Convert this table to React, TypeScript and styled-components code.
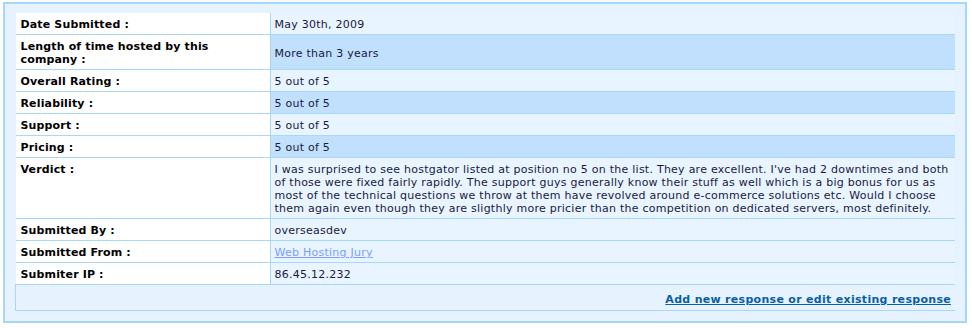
import styled, { createGlobalStyle } from 'styled-components';

const GlobalStyle = createGlobalStyle`
    body {
        margin: 0;
        background: #ffffff;
        font-family: "DejaVu Sans", Verdana, sans-serif;
    }
`;

const rows: { label: string; value: string; alt?: boolean; link?: boolean }[] = [
    { label: 'Date Submitted :', value: 'May 30th, 2009' },
    { label: 'Length of time hosted by this company :', value: 'More than 3 years', alt: true },
    { label: 'Overall Rating :', value: '5 out of 5' },
    { label: 'Reliability :', value: '5 out of 5', alt: true },
    { label: 'Support :', value: '5 out of 5' },
    { label: 'Pricing :', value: '5 out of 5', alt: true },
    {
        label: 'Verdict :',
        value: "I was surprised to see hostgator listed at position no 5 on the list. They are excellent. I've had 2 downtimes and both of those were fixed fairly rapidly. The support guys generally know their stuff as well which is a big bonus for us as most of the technical questions we throw at them have revolved around e-commerce solutions etc. Would I choose them again even though they are sligthly more pricier than the competition on dedicated servers, most definitely."
    },
    { label: 'Submitted By :', value: 'overseasdev' },
    { label: 'Submitted From :', value: 'Web Hosting Jury', link: true },
    { label: 'Submiter IP :', value: '86.45.12.232' },
];

function App() {
    return (
        <Wrapper>
            <GlobalStyle />
            <ReviewBox>
                <ReviewTable>
                    <tbody>
                        {rows.map(r => (
                            <tr key={r.label}>
                                <LabelCell>{r.label}</LabelCell>
                                <ValueCell $alt={r.alt}>
                                    {r.link ? <SourceLink href="#">{r.value}</SourceLink> : r.value}
                                </ValueCell>
                            </tr>
                        ))}
                        <tr>
                            <FooterCell colSpan={2}>
                                <ResponseLink href="#">Add new response or edit existing response</ResponseLink>
                            </FooterCell>
                        </tr>
                    </tbody>
                </ReviewTable>
            </ReviewBox>
        </Wrapper>
    )
}

const Wrapper = styled.div`
    padding: 2px 5px 0 3px;
`;

const ReviewBox = styled.div`
    width: 964px;
    box-sizing: border-box;
    border: 2px solid #a6d6f8;
    background: #e6f3ff;
    padding: 9px 10px 10px 10px;
`;

const ReviewTable = styled.table`
    width: 940px;
    border-collapse: collapse;
    font-size: 11px;
    line-height: 13px;
`;

const LabelCell = styled.td`
    width: 244px;
    background: #ffffff;
    color: #000000;
    font-weight: bold;
    letter-spacing: 0.15px;
    padding: 5px 5px 3px 5px;
    vertical-align: top;
    border-bottom: 1px solid #a8d8f8;
    border-right: 1px solid #a8d8f8;
`;

const ValueCell = styled.td<{ $alt?: boolean }>`
    background: ${p => (p.$alt ? '#c0e0fe' : '#e8f4ff')};
    color: #1a1a3c;
    letter-spacing: 0.25px;
    padding: 5px 4px 3px 4px;
    vertical-align: middle;
    border-bottom: 1px solid #a8d8f8;
`;

const SourceLink = styled.a`
    color: #7c9cff;
    text-decoration: underline;
`;

const FooterCell = styled.td`
    height: 16px;
    padding: 6px 4px 3px 4px;
    text-align: right;
    background: #e6f3ff;
    border-left: 1px solid #a8d8f8;
    border-bottom: 1px solid #a8d8f8;
`;

const ResponseLink = styled.a`
    color: #0a5f9e;
    font-weight: bold;
    letter-spacing: 0.3px;
    text-decoration: underline;
`;

export default App
